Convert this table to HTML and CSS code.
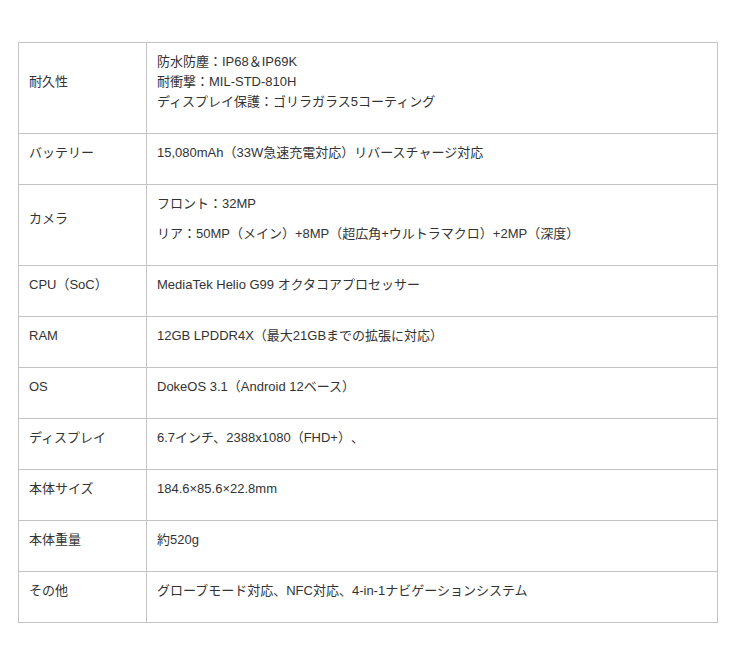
FILE: index.html
```html
<!DOCTYPE html>
<html lang="ja">
<head>
<meta charset="utf-8">
<link rel="stylesheet" href="styles.css">
</head>
<body>
<div class="wrap">
<table class="spec">
<colgroup><col class="c1"><col class="c2"></colgroup>
<tbody>
<tr><th><p>耐久性</p></th><td><p>防水防塵：IP68＆IP69K<br>耐衝撃：MIL-STD-810H<br>ディスプレイ保護：ゴリラガラス5コーティング</p></td></tr>
<tr><th><p>バッテリー</p></th><td><p>15,080mAh（33W急速充電対応）リバースチャージ対応</p></td></tr>
<tr><th><p>カメラ</p></th><td><p>フロント：32MP</p><p>リア：50MP（メイン）+8MP（超広角+ウルトラマクロ）+2MP（深度）</p></td></tr>
<tr><th><p>CPU（SoC）</p></th><td><p>MediaTek Helio G99 オクタコアプロセッサー</p></td></tr>
<tr><th><p>RAM</p></th><td><p>12GB LPDDR4X（最大21GBまでの拡張に対応）</p></td></tr>
<tr><th><p>OS</p></th><td><p>DokeOS 3.1（Android 12ベース）</p></td></tr>
<tr><th><p>ディスプレイ</p></th><td><p>6.7インチ、2388x1080（FHD+）、</p></td></tr>
<tr><th><p>本体サイズ</p></th><td><p>184.6×85.6×22.8mm</p></td></tr>
<tr><th><p>本体重量</p></th><td><p>約520g</p></td></tr>
<tr><th><p>その他</p></th><td><p>グローブモード対応、NFC対応、4-in-1ナビゲーションシステム</p></td></tr>
</tbody>
</table>
</div>
</body>
</html>
```
FILE: styles.css
```css
html, body { margin: 0; padding: 0; background: #fff; }
body {
  font-family: "Liberation Sans", "Noto Sans CJK JP", sans-serif;
  font-size: 13px;
  line-height: 20px;
  color: #333;
  text-spacing-trim: space-all;
}
.wrap { padding: 42px 0 0 18px; }
.spec {
  border-collapse: collapse;
  width: 700px;
  table-layout: fixed;
}
.c1 { width: 128px; }
.spec th, .spec td {
  border: 1px solid #c4c4c4;
  padding: 9px 10px 11px 10px;
  text-align: left;
  font-weight: normal;
}
.spec th { vertical-align: middle; }
.spec td { vertical-align: top; }
.spec p { margin: 0 0 10px 0; }
```
